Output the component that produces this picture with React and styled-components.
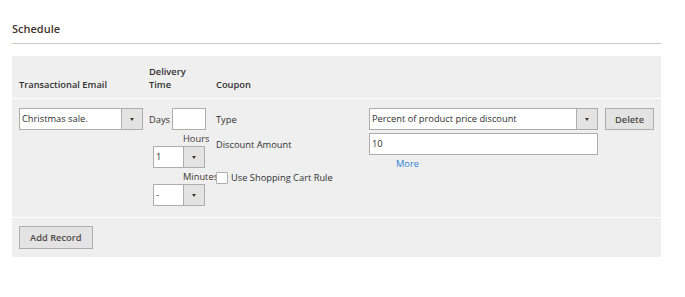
import styled, { createGlobalStyle } from "styled-components";

const GlobalStyle = createGlobalStyle`
  * { box-sizing: border-box; }
  body {
    margin: 0;
    background: #fff;
    font-family: "Open Sans", "Liberation Sans", sans-serif;
    color: #303030;
  }
`;

const Page = styled.div`
  padding: 21px 24px 0 12px;
`;

const Legend = styled.div`
  font-size: 11px;
  font-weight: 600;
  line-height: 15px;
  color: #41362f;
  padding-bottom: 7px;
  border-bottom: 1px solid #ccc6bc;
`;

const Table = styled.div`
  margin-top: 12px;
  background: #efefef;
  font-size: 9.3px;
`;

const Row = styled.div`
  display: grid;
  grid-template-columns: 130px 67px 389px 49px;
  padding: 0 7px;
`;

const HeadRow = styled(Row)`
  height: 42px;
  align-items: end;
  padding-bottom: 7px;
`;

const HeadCell = styled.div`
  font-weight: 600;
  line-height: 13px;
  color: #303030;
`;

const BodyRow = styled(Row)`
  align-items: start;
  border-top: 1px solid #fff;
  padding-top: 9px;
  padding-bottom: 11px;
`;

const FootRow = styled.div`
  border-top: 1px solid #fff;
  padding: 8px 7px;
`;

const SelectBox = styled.div`
  display: flex;
  width: ${(p) => p.$width}px;
  height: 22px;
  margin-left: ${(p) => p.$indent || 0}px;
  background: #fff;
  border: 1px solid #adadad;
`;

const SelectValue = styled.div`
  flex: 1;
  padding-left: 2px;
  line-height: 20px;
  white-space: nowrap;
  overflow: hidden;
`;

const SelectArrow = styled.div`
  width: 21px;
  display: flex;
  align-items: center;
  justify-content: center;
  background: #e3e3e3;
  border-left: 1px solid #adadad;

  &::after {
    content: "";
    border-top: 3px solid #41362f;
    border-left: 2.5px solid transparent;
    border-right: 2.5px solid transparent;
  }
`;

const TextInput = styled.div`
  width: ${(p) => p.$width}px;
  height: 22px;
  padding-left: 2px;
  line-height: 20px;
  background: #fff;
  border: 1px solid #adadad;
`;

const Delivery = styled.div`
  display: flex;
  flex-direction: column;
  align-items: flex-start;
`;

const DaysLine = styled.div`
  display: flex;
  align-items: center;
  gap: 2px;
`;

const TimeLabel = styled.div`
  padding-left: 34px;
  padding-top: 1px;
  line-height: 15px;
  white-space: nowrap;
  color: #41362f;
`;

const Coupon = styled.div`
  display: flex;
  flex-direction: column;
`;

const CouponGrid = styled.div`
  display: grid;
  grid-template-columns: 153px 229px;
  row-gap: 3px;
  align-items: center;
`;

const MoreLink = styled.a`
  display: block;
  margin-top: 1px;
  padding-left: 180px;
  line-height: 15px;
  color: #2f7fd6;
  text-decoration: none;
`;

const CheckLine = styled.label`
  display: flex;
  align-items: center;
  gap: 3px;
  height: 13px;
  line-height: 13px;
  white-space: nowrap;
`;

const CheckBox = styled.span`
  width: 12px;
  height: 12px;
  background: #fff;
  border: 1px solid #adadad;
  border-radius: 1px;
`;

const Button = styled.button`
  height: ${(p) => p.$height || 22}px;
  padding: 0 ${(p) => p.$pad || 9}px;
  background: #e3e3e3;
  border: 1px solid #adadad;
  font-family: inherit;
  font-size: 9.3px;
  font-weight: 600;
  color: #514943;
  cursor: pointer;
`;

function Select({ value, width, indent }) {
  return (
    <SelectBox $width={width} $indent={indent}>
      <SelectValue>{value}</SelectValue>
      <SelectArrow />
    </SelectBox>
  );
}

export default function App() {
  return (
    <Page>
      <GlobalStyle />
      <Legend>Schedule</Legend>
      <Table>
        <HeadRow>
          <HeadCell>Transactional Email</HeadCell>
          <HeadCell>
            Delivery
            <br />
            Time
          </HeadCell>
          <HeadCell>Coupon</HeadCell>
          <HeadCell />
        </HeadRow>
        <BodyRow>
          <Select value="Christmas sale." width={124} />
          <Delivery>
            <DaysLine>
              Days
              <TextInput $width={34} />
            </DaysLine>
            <TimeLabel>Hours</TimeLabel>
            <Select value="1" width={52} indent={4} />
            <TimeLabel>Minutes</TimeLabel>
            <Select value="-" width={52} indent={4} />
          </Delivery>
          <Coupon>
            <CouponGrid>
              <span>Type</span>
              <Select value="Percent of product price discount" width={229} />
              <span>Discount Amount</span>
              <TextInput $width={229}>10</TextInput>
            </CouponGrid>
            <MoreLink href="#">More</MoreLink>
            <CheckLine>
              <CheckBox />
              Use Shopping Cart Rule
            </CheckLine>
          </Coupon>
          <div>
            <Button>Delete</Button>
          </div>
        </BodyRow>
        <FootRow>
          <Button $height={23} $pad={10}>Add Record</Button>
        </FootRow>
      </Table>
    </Page>
  );
}
